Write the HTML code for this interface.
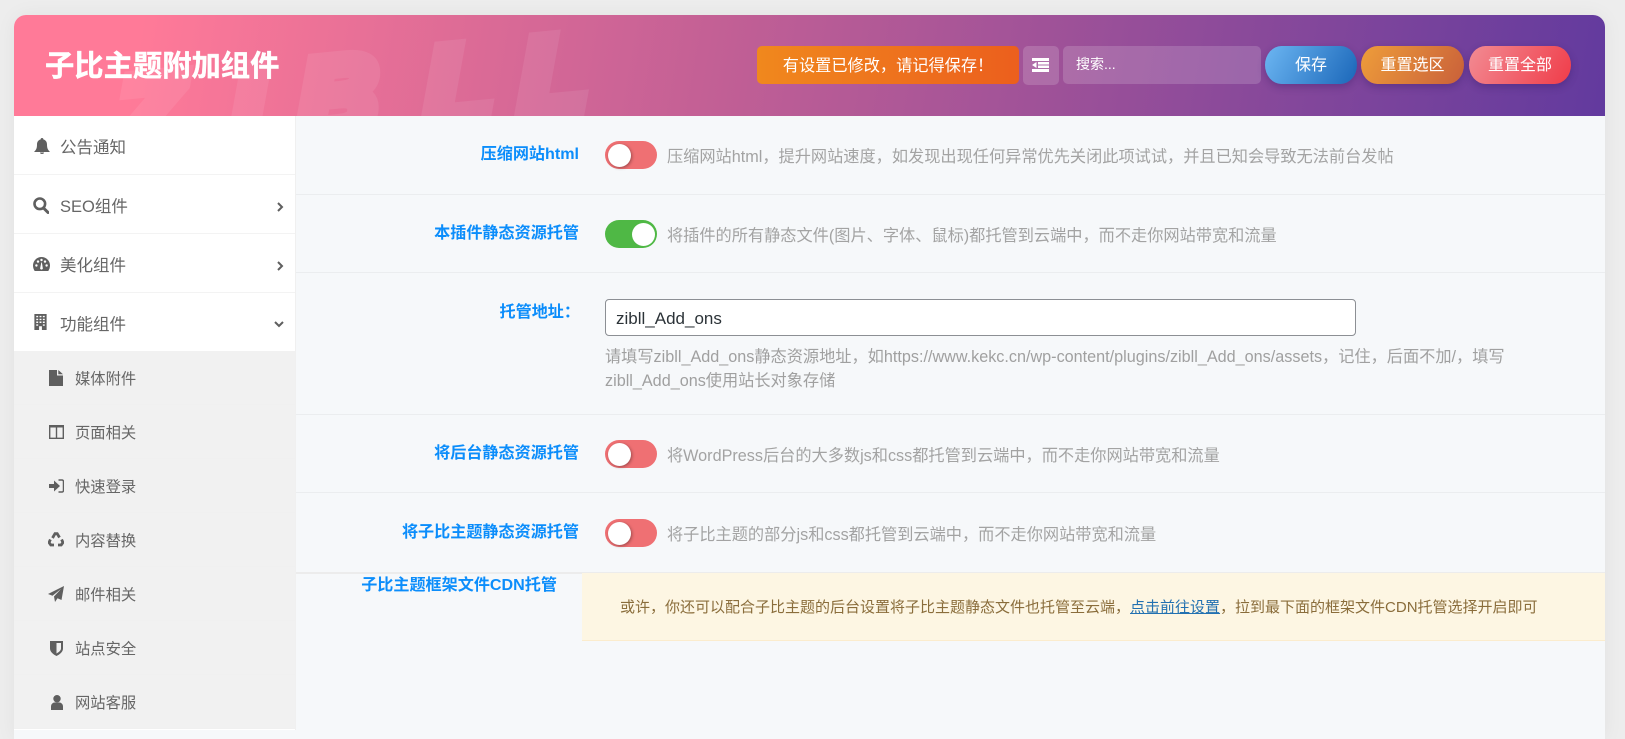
<!DOCTYPE html>
<html lang="zh-CN"><head><meta charset="utf-8"><title>子比主题附加组件</title>
<style>
*{box-sizing:border-box}
html,body{margin:0;padding:0;width:1625px;height:739px;overflow:hidden;background:#ededed;font-family:"Liberation Sans","Noto Sans CJK SC",sans-serif}
.a{position:absolute;white-space:nowrap}
#card{position:absolute;left:14px;top:15px;width:1591px;height:724px;background:#f6f8fa;border-radius:12px 12px 0 0;box-shadow:0 0 20px rgba(0,0,0,.05);overflow:hidden}
#head{position:absolute;left:14px;top:15px;width:1591px;height:101px;border-radius:12px 12px 0 0;overflow:hidden;background:linear-gradient(100deg,#ff7a98 8%,#c15f95 45%,#623a9e 100%)}
#title{left:31px;top:31px;font-size:29.300px;line-height:42px;font-weight:700;color:#fff;-webkit-text-stroke:.4px #fff}
.hb{position:absolute;top:31px;height:38px;color:#fff;font-size:16px;line-height:40px;text-align:center}
.rb{border-radius:19px/22px;box-shadow:0 3px 8px rgba(40,20,90,.3)}
#side{position:absolute;left:14px;top:116px;width:282px;height:614px;background:#fff;border-right:1px solid #f0f0f0}
.m{position:absolute;left:0;width:281px;height:59px;border-bottom:1px solid #f3f3f3;color:#666;font-size:16.500px;line-height:64px;padding-left:46px}
.s{position:absolute;left:0;width:281px;height:54px;background:#f1f1f1;border-bottom:1px solid #f0f0f0;color:#666;font-size:15.300px;line-height:58px;padding-left:61px}
.i{position:absolute;fill:#5f5f5f}
.l{position:absolute;right:1046px;font-size:16.100px;font-weight:700;color:#0b8dfb;line-height:24px;white-space:nowrap}
.d{position:absolute;left:667px;font-size:16.200px;color:#a3a3a3;line-height:24px;white-space:nowrap}
.t{position:absolute;left:605px;width:52px;height:28px;border-radius:14px;background:#ef7073}
.t:after{content:"";position:absolute;left:3px;top:2.500px;width:23px;height:23px;border-radius:50%;background:#fff;box-shadow:1px 1px 3px rgba(0,0,0,.35)}
.t.on{background:#4fb845}.t.on:after{left:27px;box-shadow:none}
.hr{position:absolute;left:296px;width:1309px;height:1px;background:#ebedef}
</style></head><body>
<div id="card"></div>
<div id="head">
<svg style="position:absolute;left:0;top:0" width="1591" height="101" viewBox="0 0 1591 101">
<text transform="translate(102 140) rotate(-5.500) skewX(-5)" x="0 117 184 311 406" y="0" font-family="Liberation Sans" font-weight="700" font-style="italic" font-size="108" fill="#fff" stroke="#fff" stroke-width="16" opacity=".08">ZIBLL</text>
</svg>
<div class="a" id="title">子比主题附加组件</div>
<div class="hb" style="left:743px;width:262px;border-radius:5px;background:linear-gradient(90deg,#f0881d,#ec5f1d);font-size:16.200px">有设置已修改，请记得保存！</div>
<div class="hb" style="left:1009px;width:36px;height:39px;border-radius:5px;background:rgba(255,255,255,.16)">
<svg style="position:absolute;left:9px;top:12px" width="17" height="14" viewBox="0 0 17 14" fill="#fff"><rect width="17" height="3"/><rect y="11" width="17" height="3"/><rect x="6" y="4" width="11" height="2.500"/><rect x="6" y="7.500" width="11" height="2.500"/><path d="M4.500 4v6L0 7z"/></svg></div>
<div class="hb" style="left:1049px;width:198px;border-radius:5px;background:rgba(255,255,255,.16);text-align:left;padding-left:13px;font-size:14px;line-height:36px">搜索...</div>
<div class="hb rb" style="left:1251px;width:92px;background:linear-gradient(120deg,#6cb6f2,#1b67b9)">保存</div>
<div class="hb rb" style="left:1347px;width:103px;background:linear-gradient(120deg,#ee9d3a,#c9603a)">重置选区</div>
<div class="hb rb" style="left:1455px;width:102px;background:linear-gradient(120deg,#f28b93,#f03c49)">重置全部</div>
</div>

<div id="side">
<div class="m" style="top:0;height:59px">公告通知</div>
<div class="m" style="top:59px">SEO组件</div>
<div class="m" style="top:118px">美化组件</div>
<div class="m" style="top:177px;border:0;height:58px">功能组件</div>
<div class="s" style="top:235px">媒体附件</div>
<div class="s" style="top:289px">页面相关</div>
<div class="s" style="top:343px">快速登录</div>
<div class="s" style="top:397px">内容替换</div>
<div class="s" style="top:451px">邮件相关</div>
<div class="s" style="top:505px">站点安全</div>
<div class="s" style="top:559px">网站客服</div>
<svg class="i" style="left:20px;top:22px" width="16" height="16" viewBox="0 0 16 16"><path d="M8 0c1 0 1.400.7 1.300 1.400C11.700 2 13 4 13 6.500c0 4 1 5.500 3 7.500H0c2-2 3-3.500 3-7.500C3 4 4.300 2 6.700 1.400 6.600.7 7 0 8 0zM6 14.500h4a2 1.500 0 0 1-4 0z"/></svg>
<svg class="i" style="left:19px;top:81px" width="16" height="17" viewBox="0 0 16 17"><circle cx="6.800" cy="6.800" r="5.300" fill="none" stroke="#5f5f5f" stroke-width="2.600"/><path d="M10.500 11l4.500 4.500" stroke="#5f5f5f" stroke-width="3" stroke-linecap="round"/></svg>
<svg class="i" style="left:19px;top:141px" width="17" height="14" viewBox="0 0 17 14"><path d="M8.500 0A8.500 8.500 0 0 0 0 8.500c0 2 .6 3.900 1.700 5.500h13.600A9 9 0 0 0 17 8.500 8.500 8.500 0 0 0 8.500 0z"/><g fill="#fff"><circle cx="3.400" cy="8.500" r="1.200"/><circle cx="5" cy="4.600" r="1.200"/><circle cx="8.500" cy="3" r="1.200"/><circle cx="12" cy="4.600" r="1.200"/><circle cx="13.600" cy="8.500" r="1.200"/><path d="M7.300 10.500l1-5h.6l.8 5a1.400 1.400 0 1 1-2.400 0z"/></g></svg>
<svg class="i" style="left:20px;top:198px" width="13" height="16" viewBox="0 0 13 17"><path d="M0 0h13v17H0z"/><g fill="#fff"><path d="M2 2h2v1.500H2zM5.500 2h2v1.500h-2zM9 2h2v1.500H9zM2 5h2v1.500H2zM5.500 5h2v1.500h-2zM9 5h2v1.500H9zM2 8h2v1.500H2zM5.500 8h2v1.500h-2zM9 8h2v1.500H9zM2 11h2v1.500H2zM9 11h2v1.500H9zM5 13h3v4H5z"/></g></svg>
<svg style="position:absolute;left:262px;top:85px" width="8" height="12" viewBox="0 0 8 12"><path d="M2 2l4 4-4 4" fill="none" stroke="#5f5f5f" stroke-width="2"/></svg>
<svg style="position:absolute;left:262px;top:144px" width="8" height="12" viewBox="0 0 8 12"><path d="M2 2l4 4-4 4" fill="none" stroke="#5f5f5f" stroke-width="2"/></svg>
<svg style="position:absolute;left:259px;top:204px" width="12" height="8" viewBox="0 0 12 8"><path d="M2 2l4 4 4-4" fill="none" stroke="#5f5f5f" stroke-width="2"/></svg>
<svg class="i" style="left:35px;top:254px" width="14" height="16" viewBox="0 0 14 16"><path d="M0 0h8v5.500h6V16H0zM9.300 0L14 4.300H9.300z"/></svg>
<svg style="position:absolute;left:35px;top:309px" width="15" height="14" viewBox="0 0 15 14"><path d="M.7.700h13.600v12.600H.7zM7.500 1v12" fill="none" stroke="#5f5f5f" stroke-width="1.400"/><path d="M1 1h13v1.500H1z" fill="#5f5f5f"/></svg>
<svg class="i" style="left:35px;top:363px" width="15" height="14" viewBox="0 0 15 14"><path d="M0 5h5V1.500L11 7l-6 5.500V9H0z"/><path d="M9.500 1H13a1.500 1.500 0 0 1 1.500 1.500v9A1.500 1.500 0 0 1 13 13H9.500" fill="none" stroke="#5f5f5f" stroke-width="1.500"/></svg>
<svg style="position:absolute;left:34px;top:416px" width="16" height="15" viewBox="0 0 16 15"><path d="M4.500 6L7 1.700h2.200L11.500 5.500M13.600 7.500L15 10.500 13.200 13H10M6 13H2.800L1 10.500 2.400 7.500" fill="none" stroke="#5f5f5f" stroke-width="2.800"/></svg>
<svg class="i" style="left:34px;top:470px" width="16" height="16" viewBox="0 0 16 16"><path d="M16 0l-2.500 14-4-1.800L7 16l-1-5.500L13 3 4.500 9.800 0 8z"/></svg>
<svg class="i" style="left:36px;top:525px" width="13" height="15" viewBox="0 0 13 15"><path d="M0 0h13v7.500c0 3.500-3.500 6-6.500 7.500C3.500 13.500 0 11 0 7.500zM6.500 2v10.500c2-1.200 4.500-2.800 4.500-5V2z"/></svg>
<svg class="i" style="left:37px;top:579px" width="12" height="15" viewBox="0 0 12 15"><circle cx="6" cy="3.700" r="3.700"/><path d="M0 15v-3.500C0 9 2 7.500 3.500 7.500h5C10 7.500 12 9 12 11.500V15z"/></svg>
</div>

<div class="hr" style="top:194px"></div><div class="hr" style="top:272px"></div><div class="hr" style="top:414px"></div><div class="hr" style="top:492px"></div><div class="hr" style="top:572px;height:2px;background:#ececec"></div>

<div class="l" style="top:142px">压缩网站html</div>
<div class="t" style="top:141px"></div>
<div class="d" style="top:145px">压缩网站html，提升网站速度，如发现出现任何异常优先关闭此项试试，并且已知会导致无法前台发帖</div>

<div class="l" style="top:221px">本插件静态资源托管</div>
<div class="t on" style="top:220px"></div>
<div class="d" style="top:224px">将插件的所有静态文件(图片、字体、鼠标)都托管到云端中，而不走你网站带宽和流量</div>

<div class="l" style="top:300px;right:1045px">托管地址：</div>
<div style="position:absolute;left:605px;top:299px;width:751px;height:37px;background:#fff;border:1px solid #8c8f94;border-radius:4px;padding-left:10px;font-size:17px;line-height:38px;color:#2c3338">zibll_Add_ons</div>
<div class="d" style="left:605px;top:346px;line-height:23.500px;color:#a0a0a0">请填写zibll_Add_ons静态资源地址，如https://www.kekc.cn/wp-content/plugins/zibll_Add_ons/assets，记住，后面不加/，填写<br>zibll_Add_ons使用站长对象存储</div>

<div class="l" style="top:441px">将后台静态资源托管</div>
<div class="t" style="top:440px"></div>
<div class="d" style="top:444px">将WordPress后台的大多数js和css都托管到云端中，而不走你网站带宽和流量</div>

<div class="l" style="top:520px">将子比主题静态资源托管</div>
<div class="t" style="top:519px"></div>
<div class="d" style="top:523px">将子比主题的部分js和css都托管到云端中，而不走你网站带宽和流量</div>

<div class="l" style="top:573px;right:1068px">子比主题框架文件CDN托管</div>
<div style="position:absolute;left:582px;top:573px;width:1023px;height:68px;background:#fdf6e3;border-bottom:1px solid #fbeccd;padding-left:38px;font-size:15px;line-height:70px;color:#8a6d3b;white-space:nowrap">或许，你还可以配合子比主题的后台设置将子比主题静态文件也托管至云端，<span style="color:#2271b1;text-decoration:underline">点击前往设置</span>，拉到最下面的框架文件CDN托管选择开启即可</div>
</body></html>
